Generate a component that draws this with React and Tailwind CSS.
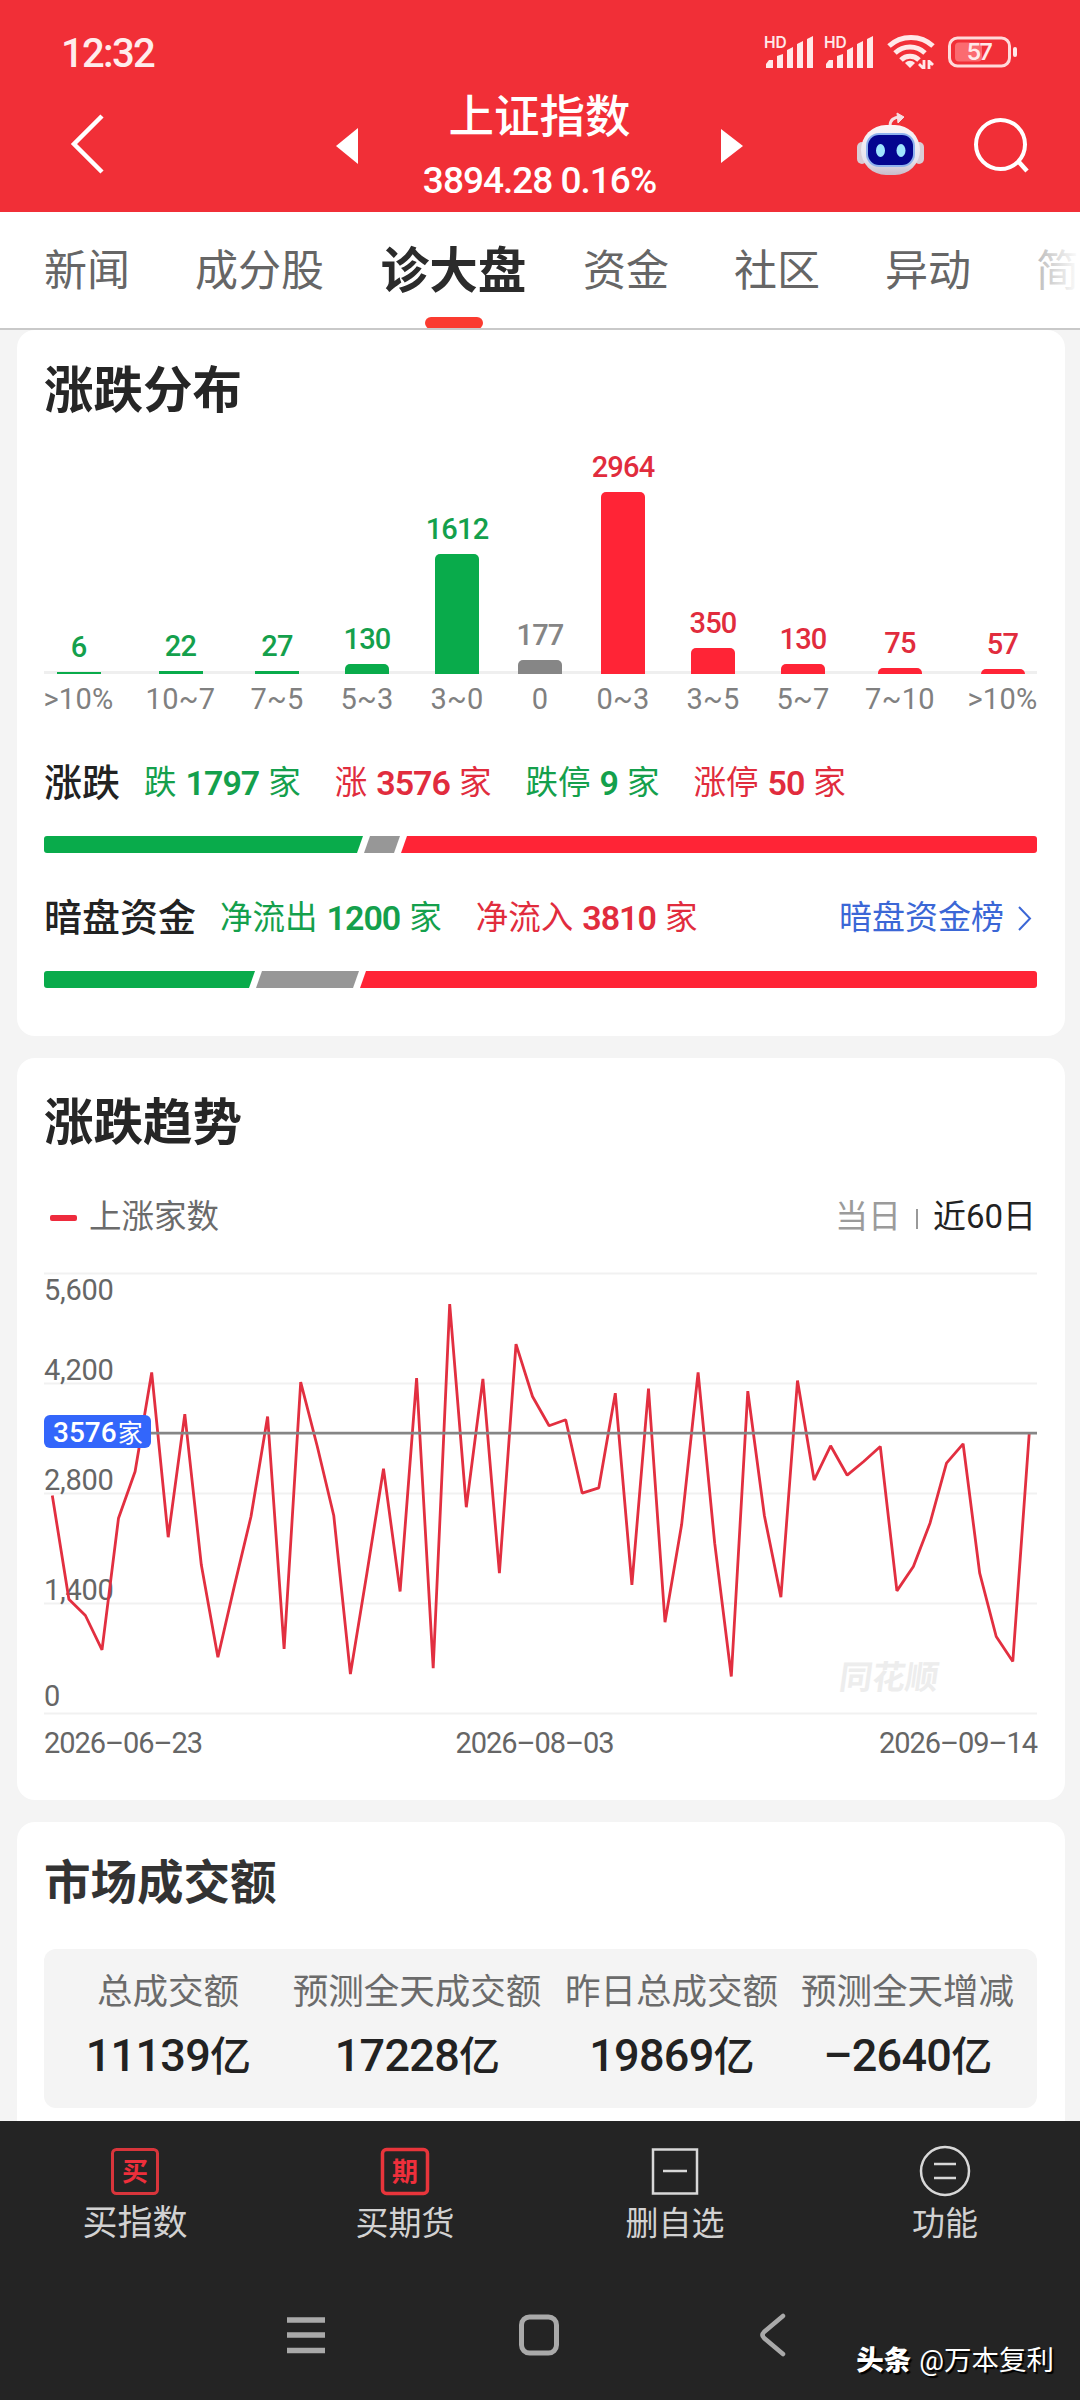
import React from 'react';

const TABS = ['新闻', '成分股', '诊大盘', '资金', '社区', '异动', '简'];

// h is the drawn height of the bar, w the width of its column
const DISTRIBUTION = [
  { label: '>10%', value: 6, h: 2, w: 69, tone: 'down' },
  { label: '10~7', value: 22, h: 3, w: 71, tone: 'down' },
  { label: '7~5', value: 27, h: 3, w: 58, tone: 'down' },
  { label: '5~3', value: 130, h: 10, w: 58, tone: 'down' },
  { label: '3~0', value: 1612, h: 120, w: 58, tone: 'down' },
  { label: '0', value: 177, h: 14, w: 44, tone: 'flat' },
  { label: '0~3', value: 2964, h: 182, w: 58, tone: 'up' },
  { label: '3~5', value: 350, h: 26, w: 58, tone: 'up' },
  { label: '5~7', value: 130, h: 10, w: 58, tone: 'up' },
  { label: '7~10', value: 75, h: 6, w: 72, tone: 'up' },
  { label: '>10%', value: 57, h: 5, w: 69, tone: 'up' },
];

const BAR_COLOR = { down: 'bg-[#09ab4b]', flat: 'bg-[#868686]', up: 'bg-[#ff2436]' };
const TEXT_COLOR = { down: 'text-[#14a04c]', flat: 'text-[#858585]', up: 'text-[#e12c3d]' };

const TREND = [
  2775, 1455, 1247, 810, 2486, 3080, 4340, 2244, 3810, 1892, 717, 1630, 2507, 3780, 823,
  4217, 3398, 2516, 501, 1786, 3114, 1553, 4268, 577, 5210, 2626, 4259, 1786, 4701, 4035,
  3661, 3738, 2804, 2872, 4077, 1638, 4136, 1162, 2401, 4340, 2168, 471, 4102, 2516, 1481,
  4238, 2970, 3407, 3033, 3207, 3398, 1561, 1871, 2422, 3186, 3432, 1786, 980, 662, 3576,
];

const AMOUNTS = [
  { label: '总成交额', value: '11139亿', width: 'w-[248px]' },
  { label: '预测全天成交额', value: '17228亿', width: 'w-[250px]' },
  { label: '昨日总成交额', value: '19869亿', width: 'ml-[23px] w-[213px]' },
  { label: '预测全天增减', value: '–2640亿', width: 'ml-[23px] w-[213px]' },
];

const Signal = () => (
  <svg className="overflow-visible" width="51" height="34" viewBox="0 0 51 34" fill="#ffe9e9">
    <text x="0" y="13" fontSize="15.500" fontWeight="600" fontFamily="Inter, sans-serif">HD</text>
    <path d="M2 33v-4l3-4h4v8zM13 33V21l6-2v14zM23 33V15l6-3v21zM33 33V9l6-3v27zM43 33V4l6-3v32z" />
  </svg>
);

const StatusBar = () => (
  <div className="flex h-[104px] items-center justify-between pl-[61px] pr-[62px]">
    <span className="mt-[3px] text-[40px] font-medium leading-[40px] tracking-[-1.7px] text-[#ffecec]">12:32</span>
    <div className="flex items-center">
      <Signal />
      <div className="w-[9px]" />
      <Signal />
      <svg className="ml-[12px]" width="48" height="36" viewBox="0 0 48 36" fill="none" stroke="#ffe9e9" strokeWidth="5">
        <path d="M2 12C14 0.500 34 0.500 46 12" />
        <path d="M8 19c8.500-8 21.500-8 30 0" />
        <path d="M14 26c5-5 13-5 18 0" />
        <path d="M18 29c3-3 7-3 10 0l-5 5z" fill="#ffe9e9" stroke="none" />
        <path d="M37 26v9M36 34l-4-4M42 35v-9M42 27l4 4" strokeWidth="2.800" />
      </svg>
      <svg className="ml-[13px]" width="70" height="32" viewBox="0 0 70 32">
        <rect x="1.500" y="2" width="60" height="28" rx="8" fill="none" stroke="#ffdada" strokeWidth="3" />
        <rect x="7" y="6.500" width="27" height="19" rx="4" fill="#fb6b70" />
        <rect x="65" y="11" width="4" height="10" rx="2" fill="#ffe9e9" />
        <text x="31" y="24" textAnchor="middle" fontSize="23" fontWeight="600" fontFamily="Inter, sans-serif" fill="#ffe9e9" letterSpacing="-1.500">57</text>
      </svg>
    </div>
  </div>
);

const Robot = () => (
  <svg width="70" height="66" viewBox="0 0 70 66">
    <defs>
      <linearGradient id="shell" x1="0" y1="0" x2="0" y2="1">
        <stop offset="0" stopColor="#fbf4f6" />
        <stop offset="0.700" stopColor="#e6e4ee" />
        <stop offset="1" stopColor="#c9bcc8" />
      </linearGradient>
    </defs>
    <path d="M34 14c0-6 4-9 10-9" fill="none" stroke="#f6dfe2" strokeWidth="3" />
    <path d="M41 1l7 4-6 6z" fill="#f6dfe2" stroke="#f6dfe2" />
    <rect x="1" y="30" width="10" height="22" rx="5" fill="#d9cdd6" />
    <rect x="58" y="30" width="10" height="22" rx="5" fill="#d9cdd6" />
    <rect x="5" y="13" width="59" height="50" rx="25" fill="url(#shell)" />
    <rect x="10" y="21" width="49" height="34" rx="13" fill="#8fb2ee" />
    <rect x="12" y="23" width="45" height="30" rx="11" fill="#04058f" />
    <ellipse cx="24.500" cy="38.500" rx="4.500" ry="6.500" fill="#9fe6ff" />
    <ellipse cx="45" cy="38.500" rx="4.500" ry="6.500" fill="#9fe6ff" />
  </svg>
);

const TitleBar = () => (
  <div className="flex h-[108px] items-start pl-[70px] pr-[51px]">
    <svg className="mt-[10px]" width="36" height="60" viewBox="0 0 36 60" fill="none" stroke="#fff" strokeWidth="4.500">
      <path d="M32 2L4 30l28 28" />
    </svg>
    <svg className="ml-[230px] mt-[24px]" width="22" height="36" viewBox="0 0 22 36" fill="#fff">
      <path d="M0 18L22 0v36z" />
    </svg>
    <div className="flex w-[363px] flex-col items-center text-white">
      <h1 className="-mt-[11px] text-[45.5px] font-medium leading-[50px]">上证指数</h1>
      <div className="mt-[18px] whitespace-nowrap text-[37px] font-medium leading-[40px] tracking-[-1px]">3894.28 0.16%</div>
    </div>
    <svg className="mt-[24px]" width="22" height="36" viewBox="0 0 22 36" fill="#fff">
      <path d="M22 18L0 1v34z" />
    </svg>
    <div className="ml-auto mt-[8px] flex items-start gap-[47px]">
      <Robot />
      <svg className="mt-[5px]" width="56" height="56" viewBox="0 0 56 56" fill="none" stroke="#fff" strokeWidth="4">
        <circle cx="27.500" cy="27.500" r="24.500" />
        <path d="M45 44l9 10" strokeWidth="4.500" />
      </svg>
    </div>
  </div>
);

const TabBar = () => (
  <nav className="relative flex h-[118px] gap-[65px] overflow-hidden border-b-2 border-[#c9c9c9] bg-white pl-[44px]">
    {TABS.map((tab) => {
      const active = tab === '诊大盘';
      return (
        <div key={tab} className="flex shrink-0 flex-col items-center">
          <span
            className={`mt-[34px] whitespace-nowrap text-[43px] leading-[50px] ${
              active ? 'scale-[1.13] font-bold text-[#2b2b2b]' : 'text-[#666]'
            }`}
          >
            {tab}
          </span>
          {active && <div className="-mb-px mt-auto h-[12px] w-[58px] rounded-full bg-[#fb3b30]" />}
        </div>
      );
    })}
    <div className="absolute right-0 top-0 h-full w-[50px] bg-gradient-to-r from-white/50 to-white" />
  </nav>
);

const Distribution = () => (
  <div>
    <div className="flex h-[256px] items-end justify-between border-b-[3px] border-[#efefef]">
      {DISTRIBUTION.map((d, i) => (
        <div key={i} className="-mb-[3px] flex flex-col items-center" style={{ width: d.w }}>
          <span className={`mb-[10px] text-[29px] font-medium leading-[30px] tracking-[-0.8px] ${TEXT_COLOR[d.tone]}`}>{d.value}</span>
          <div className={`w-[44px] ${d.h > 4 ? 'rounded-t-[5px]' : ''} ${BAR_COLOR[d.tone]}`} style={{ height: d.h }} />
        </div>
      ))}
    </div>
    <div className="mt-[9px] flex justify-between text-[29px] leading-[32px] tracking-[0.3px] text-[#808080]">
      {DISTRIBUTION.map((d, i) => (
        <span key={i} className="flex justify-center whitespace-nowrap" style={{ width: d.w }}>{d.label}</span>
      ))}
    </div>
  </div>
);

const Count = ({ name, value, tone }) => (
  <span className={`flex items-center whitespace-nowrap text-[32.5px] leading-[40px] ${TEXT_COLOR[tone]}`}>
    {name}
    <b className="mx-[9px] text-[34px] font-semibold tracking-[-1px]">{value}</b>
    家
  </span>
);

// Three slanted segments; a and b are where the first and the grey one end
const SplitBar = ({ a, b }) => (
  <svg className="block" width="993" height="17" viewBox="0 0 993 17">
    <path d={`M3 0H${a}L${a - 6} 17H3Q0 17 0 14V3Q0 0 3 0z`} fill="#09ab4b" />
    <path d={`M${a + 7} 0H${b}L${b - 6} 17H${a + 1}z`} fill="#979797" />
    <path d={`M${b + 7} 0H990Q993 0 993 3V14Q993 17 990 17H${b + 1}z`} fill="#ff2436" />
  </svg>
);

const TrendChart = () => {
  const y = (v) => 441.5 - (v / 5600) * 440;
  const points = TREND.map((v, i) => `${(8.3 + i * 16.56).toFixed(1)},${y(v).toFixed(1)}`).join(' ');
  return (
    <svg className="block" width="993" height="444" viewBox="0 0 993 444" fontFamily="Roboto, 'Noto Sans CJK SC', sans-serif">
      {[0, 1400, 2800, 4200, 5600].map((v) => (
        <path key={v} d={`M0 ${y(v)}H993`} stroke="#f1f1f1" strokeWidth="2" />
      ))}
      <g fontSize="29" fill="#666" letterSpacing="-0.300">
        <text x="0" y="28">5,600</text>
        <text x="0" y="108">4,200</text>
        <text x="0" y="218">2,800</text>
        <text x="0" y="328">1,400</text>
        <text x="0" y="434">0</text>
      </g>
      <text transform="translate(794 417) skewX(-8)" fontSize="33" fontWeight="700" fill="#ededed">同花顺</text>
      <polyline points={points} fill="none" stroke="#e22f40" strokeWidth="2.800" strokeLinejoin="bevel" />
      <path d={`M0 ${y(3576) + 0.6}H993`} stroke="#868686" strokeWidth="2.600" />
      <rect x="0" y="143" width="107" height="33" rx="6" fill="#3366fb" />
      <text x="9" y="169.500" fontSize="28" fontWeight="500" fill="#fff">
        3576<tspan fontSize="25" fontWeight="400" dx="1">家</tspan>
      </text>
    </svg>
  );
};

const Action = ({ label, children }) => (
  <div className="flex w-[270px] flex-col items-center">
    <svg width="52" height="52" viewBox="0 0 52 52" fill="none">{children}</svg>
    <span className={`mt-[7px] leading-[40px] text-[#d2d2d2] ${label === '买指数' ? 'text-[35px]' : 'text-[33px]'}`}>{label}</span>
  </div>
);

const App = () => (
  <div className="relative flex h-[2400px] w-[1080px] flex-col overflow-hidden bg-[#f4f4f4] font-['Roboto','Noto_Sans_CJK_SC',sans-serif]">
    <header className="bg-[#f12f37]">
      <StatusBar />
      <TitleBar />
    </header>
    <TabBar />

    <main className="flex h-[1791px] shrink-0 flex-col gap-[22px] overflow-hidden pl-[17px] pr-[15px]">
      <section className="h-[706px] shrink-0 rounded-[18px] bg-white pl-[27px] pr-[28px]">
        <h2 className="pt-[34px] text-[49.5px] font-bold leading-[54px] text-[#262626]">涨跌分布</h2>
        <Distribution />
        <div className="mt-[43px] flex h-[50px] items-center gap-[34px]">
          <span className="-mr-[10px] text-[38px] font-medium text-[#222]">涨跌</span>
          <Count name="跌" value="1797" tone="down" />
          <Count name="涨" value="3576" tone="up" />
          <Count name="跌停" value="9" tone="down" />
          <Count name="涨停" value="50" tone="up" />
        </div>
        <div className="mt-[28px]"><SplitBar a={319} b={356} /></div>
        <div className="mt-[40px] flex h-[50px] items-center gap-[34px]">
          <span className="-mr-[10px] text-[38px] font-medium text-[#222]">暗盘资金</span>
          <Count name="净流出" value="1200" tone="down" />
          <Count name="净流入" value="3810" tone="up" />
          <a className="ml-auto flex items-center gap-[14px] pr-[5px] text-[33px] text-[#3b67d6]">
            暗盘资金榜
            <svg width="14" height="25" viewBox="0 0 14 25" fill="none" stroke="#3b67d6" strokeWidth="2">
              <path d="M1 1l11 11.500L1 24" />
            </svg>
          </a>
        </div>
        <div className="mt-[28px]"><SplitBar a={211} b={315} /></div>
      </section>

      <section className="h-[742px] shrink-0 rounded-[18px] bg-white pl-[27px] pr-[28px]">
        <h2 className="pt-[38px] text-[49.5px] font-bold leading-[54px] text-[#262626]">涨跌趋势</h2>
        <div className="mt-[46px] flex h-[42px] items-center text-[33px] leading-[42px]">
          <div className="ml-[6px] mt-[2px] h-[6px] w-[27px] rounded-[2px] bg-[#ee2b3d]" />
          <span className="ml-[12px] text-[32.5px] text-[#6b6b6b]">上涨家数</span>
          <span className="ml-auto text-[#9b9b9b]">当日</span>
          <div className="mx-[15px] mt-[4px] h-[20px] w-[2px] bg-[#999]" />
          <span className="pr-px text-[#222]">近60日</span>
        </div>
        <div className="mt-[34px]"><TrendChart /></div>
        <div className="mt-[10px] flex justify-between text-[29px] leading-[34px] tracking-[-1.05px] text-[#666]">
          <span>2026–06–23</span>
          <span className="mr-[12px]">2026–08–03</span>
          <span>2026–09–14</span>
        </div>
      </section>

      <section className="h-[330px] shrink-0 rounded-[18px] bg-white pl-[27px] pr-[28px]">
        <h2 className="pt-[34px] text-[46.5px] font-bold leading-[54px] text-[#333]">市场成交额</h2>
        <div className="mt-[39px] flex h-[159px] rounded-[12px] bg-[#f4f4f4]">
          {AMOUNTS.map((a) => (
            <div key={a.label} className={`flex flex-col items-center whitespace-nowrap ${a.width}`}>
              <span className="mt-[23px] text-[35.5px] leading-[40px] text-[#6b6b6b]">{a.label}</span>
              <span className="mt-[18px] text-[45px] font-medium leading-[52px] tracking-[-0.7px] text-[#222]">
                {a.value.slice(0, -1)}<span className="text-[41px]">亿</span>
              </span>
            </div>
          ))}
        </div>
      </section>
    </main>

    <footer className="h-[279px] shrink-0 bg-[#242424]">
      <div className="flex pt-[24px]">
        <Action label="买指数">
          <rect x="3.500" y="4.500" width="45" height="44" rx="4" stroke="#d8353b" strokeWidth="3" />
          <text x="26" y="36" textAnchor="middle" fontSize="26" fontWeight="700" fill="#ee2f3b">买</text>
        </Action>
        <Action label="买期货">
          <rect x="3.500" y="4.500" width="45" height="44" rx="4" stroke="#e8353b" strokeWidth="3.500" />
          <text x="26" y="36" textAnchor="middle" fontSize="26" fontWeight="700" fill="#ee2f3b">期</text>
        </Action>
        <Action label="删自选">
          <path d="M4 4.500h44v44H4zM14 26h24" stroke="#d8d8d8" strokeWidth="2.500" />
        </Action>
        <Action label="功能">
          <circle cx="26" cy="26" r="24" stroke="#d8d8d8" strokeWidth="2.500" />
          <path d="M15 19h22M15 33h22" stroke="#d8d8d8" strokeWidth="2.500" />
        </Action>
      </div>
      <div className="mt-[68px] flex items-center pl-[286px]">
        <svg width="40" height="46" viewBox="0 0 40 46" stroke="#a9a9a9" strokeWidth="5.500">
          <path d="M1 8h38M1 23h38M1 38.500h38" />
        </svg>
        <svg className="ml-[192px]" width="42" height="46" viewBox="0 0 42 46" fill="none" stroke="#a9a9a9" strokeWidth="5">
          <rect x="3.500" y="5" width="35" height="36" rx="8" />
        </svg>
        <svg className="ml-[198px]" width="30" height="46" viewBox="0 0 30 46" fill="none" stroke="#a9a9a9" strokeWidth="4.500" strokeLinecap="round">
          <path d="M25 4L6 20q-3 3 0 6l19 16" />
        </svg>
      </div>
    </footer>

    {/* publisher credit laid over the navigation bar */}
    <div className="absolute bottom-[21px] right-[26px] flex items-center gap-[8px] whitespace-nowrap text-[27.5px] leading-[36px] text-white [text-shadow:2px_2px_1px_#000]">
      <b className="font-black">头条</b>
      <span>@万本复利</span>
    </div>
  </div>
);

export default App;
